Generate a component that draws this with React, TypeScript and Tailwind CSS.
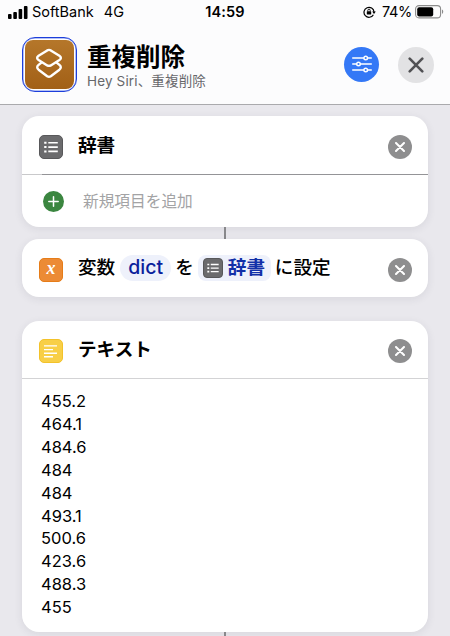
import type { ReactNode } from "react";
import clsx from "clsx";

const VALUES = ["455.2", "464.1", "484.6", "484", "484", "493.1", "500.6", "423.6", "488.3", "455"];

// ── Icons ─────────────────────────────────────────────────────────────────────
function SignalIcon() {
  return (
    <svg width="20" height="13" viewBox="0 0 20 13" fill="#000">
      <rect x="0" y="8" width="3.6" height="5" rx="0.9" />
      <rect x="5.3" y="6" width="3.6" height="7" rx="0.9" />
      <rect x="10.6" y="3" width="3.6" height="10" rx="0.9" />
      <rect x="15.9" y="0" width="3.6" height="13" rx="0.9" />
    </svg>
  );
}

function RotationLockIcon() {
  return (
    <svg width="13" height="12" viewBox="0 0 13 12" fill="none" stroke="#000">
      <path d="M10.4 8.7A5 5 0 1 1 11 6" strokeWidth="1.2" />
      <path d="M9.2 5.6h3.6L11 8z" fill="#000" stroke="none" />
      <rect x="3.8" y="5.2" width="4.4" height="3.4" rx="0.5" fill="#000" stroke="none" />
      <path d="M4.8 5.4V4.4a1.2 1.2 0 0 1 2.4 0v1" strokeWidth="0.9" />
    </svg>
  );
}

function BatteryIcon() {
  return (
    <svg width="29" height="14" viewBox="0 0 29 14" fill="none">
      <rect x="0.6" y="0.6" width="25" height="12.3" rx="3.4" stroke="#8c8c8c" strokeWidth="1.1" />
      <rect x="2.2" y="2.2" width="16" height="9.2" rx="2" fill="#000" />
      <path d="M27 4.6c1.7.6 1.7 3.7 0 4.3z" fill="#8c8c8c" />
    </svg>
  );
}

function ShortcutsGlyph() {
  return (
    <svg width="30" height="34" viewBox="0 0 30 34" fill="none" stroke="#fff" strokeWidth="2.4" strokeLinejoin="round" strokeLinecap="round" className="shrink-0">
      <path d="M12.2 3.4q1.8-1 3.6 0l8.6 5.4q3 2.1 0 4.2l-8.6 5.4q-1.8 1-3.6 0L3.6 13q-3-2.1 0-4.2z" />
      <path d="M6.4 15.6l-2.8 2.3q-2.8 2.4 0 4.8l8.6 6.5q1.8 1.2 3.6 0l8.6-6.5q2.8-2.4 0-4.8l-2.8-2.3" />
    </svg>
  );
}

function SlidersGlyph() {
  return (
    <svg width="20" height="18" viewBox="0 0 20 18" fill="none" stroke="#fff" strokeWidth="1.4" strokeLinecap="round">
      <path d="M.7 3h11.1M15.6 3h3.7M.7 9h3.9M8.4 9h10.9M.7 15h11.1M15.6 15h3.7" />
      <circle cx="13.7" cy="3" r="1.8" />
      <circle cx="6.5" cy="9" r="1.8" />
      <circle cx="13.7" cy="15" r="1.8" />
    </svg>
  );
}

function ListGlyph({ size }: { size: number }) {
  return (
    <svg width={size} height={size} viewBox="0 0 24 24" fill="none" stroke="#fff" className="shrink-0">
      <path d="M5.2 7.8h2.3M5.2 12.1h2.3M5.2 16.4h2.3" strokeWidth="2" />
      <path d="M9.3 7.8h9.5M9.3 12.1h9.5M9.3 16.4h9.5" strokeWidth="1.6" />
    </svg>
  );
}

function TextGlyph() {
  return (
    <svg width="24" height="24" viewBox="0 0 24 24" stroke="#fff" strokeWidth="1.4" className="shrink-0">
      <path d="M5 6.9h13M5 10.6h9M5 14.2h13M5 17.8h9" />
    </svg>
  );
}

// ── Small pieces ──────────────────────────────────────────────────────────────
function RemoveButton() {
  return (
    <button aria-label="削除" className="ml-auto flex size-6 shrink-0 items-center justify-center rounded-full bg-[#8e8e8f]">
      <svg width="10" height="10" viewBox="0 0 10 10" stroke="#fff" strokeWidth="2" strokeLinecap="round">
        <path d="M1 1l8 8M9 1L1 9" />
      </svg>
    </button>
  );
}

function ActionIcon({ className, children }: { className: string; children: ReactNode }) {
  return (
    <span className={clsx("flex size-6 shrink-0 items-center justify-center rounded-[5px] border", className)}>
      {children}
    </span>
  );
}

function Card({ className, children }: { className: string; children: ReactNode }) {
  return (
    <section className={clsx("w-[406px] shrink-0 rounded-[17px] bg-white shadow-[0_2px_9px_rgba(40,40,70,0.09)]", className)}>
      {children}
    </section>
  );
}

// ── Screen ────────────────────────────────────────────────────────────────────
export default function App() {
  return (
    <div className="flex h-[636px] w-[450px] flex-col overflow-hidden bg-[#e9e8ed] font-['Inter','Noto_Sans_CJK_JP',sans-serif] text-black">
      <header className="h-[105px] shrink-0 border-b border-[#aaaaad] bg-[#fcfcfd]">
        {/* Status bar */}
        <div className="grid h-6 grid-cols-[1fr_auto_1fr] items-center pl-2 pr-1.5 text-[14.5px] leading-none">
          <div className="flex items-center">
            <SignalIcon />
            <span className="ml-1">SoftBank</span>
            <span className="ml-2.5">4G</span>
          </div>
          <span className="mr-0.5 font-semibold tracking-[0.15px]">14:59</span>
          <div className="flex items-center justify-end">
            <RotationLockIcon />
            <span className="ml-1.5 mr-[3px] tracking-[-0.3px]">74%</span>
            <BatteryIcon />
          </div>
        </div>

        {/* Shortcut title */}
        <div className="flex h-20 items-center pl-[22px] pr-4">
          <div className="flex size-[55px] items-center justify-center rounded-[13px] border border-[#1c3edb] bg-white shadow-[inset_0_0_0_0.5px_#6d83e8]">
            <div className="flex size-[49px] items-center justify-center rounded-[8px] bg-linear-to-b from-[#b5772a] to-[#a26016]">
              <ShortcutsGlyph />
            </div>
          </div>
          <div className="ml-2.5 pt-[5px]">
            <h1 className="text-[24.5px] font-bold leading-[30px]">重複削除</h1>
            <p className="-mt-px text-[13.5px] leading-5 tracking-[0.15px] text-[#67676a]">Hey Siri、重複削除</p>
          </div>
          <button aria-label="設定" className="ml-auto flex size-[35px] items-center justify-center rounded-full bg-[#3478f6]">
            <SlidersGlyph />
          </button>
          <button aria-label="閉じる" className="ml-[19px] mt-0.5 flex size-9 items-center justify-center rounded-full bg-[#e2e2e4]">
            <svg width="16" height="16" viewBox="0 0 16 16" stroke="#515154" strokeWidth="2.6" strokeLinecap="round">
              <path d="M1.7 1.7l12.6 12.6M14.3 1.7L1.7 14.3" />
            </svg>
          </button>
        </div>
      </header>

      <main className="flex flex-col items-center pt-[11px]">
        {/* Dictionary */}
        <Card className="h-[111px]">
          <div className="flex h-[58px] items-center pl-[17px] pr-4 pt-1">
            <ActionIcon className="border-[#58585a] bg-[#6b6b6d]"><ListGlyph size={24} /></ActionIcon>
            <h2 className="-mt-0.5 ml-[15px] text-[18.6px] font-bold">辞書</h2>
            <RemoveButton />
          </div>
          <div className="flex h-px">
            <div className="w-5 bg-[#c9c9cb]" />
            <div className="flex-1 bg-[#949497]" />
          </div>
          <div className="flex h-[52px] items-center pl-[21px]">
            <span className="flex size-[21px] items-center justify-center rounded-full bg-[#3b8640]">
              <svg width="11" height="11" viewBox="0 0 11 11" stroke="#fff" strokeWidth="1.5" strokeLinecap="round">
                <path d="M5.5.8v9.4M.8 5.5h9.4" />
              </svg>
            </span>
            <span className="ml-[19px] pt-0.5 text-[15.7px] text-[#a3a3a5]">新規項目を追加</span>
          </div>
        </Card>

        <div className="h-3 w-0.5 bg-[#88888b]" />

        {/* Set variable */}
        <Card className="flex h-[58px] items-center pl-[17px] pr-4 text-[18.6px]">
          <ActionIcon className="mt-1 border-[#e67c18] bg-[#ec8b35]">
            <span className="-mt-1 font-['Liberation_Serif',serif] text-[18px] font-bold italic leading-none text-white">x</span>
          </ActionIcon>
          <span className="ml-[15px] font-medium">変数</span>
          <span className="ml-[5px] flex h-[26px] w-[51px] items-center justify-center rounded-full bg-[#eef1fb] text-[19.5px] font-medium text-[#0b1f9c]">dict</span>
          <span className="ml-1 font-medium">を</span>
          <span className="ml-1 flex h-[26px] w-[73px] items-center rounded-lg bg-[#eef1fb] pl-[5px]">
            <span className="flex size-5 shrink-0 items-center justify-center rounded-[4px] border border-[#58585a] bg-[#6b6b6d]"><ListGlyph size={20} /></span>
            <span className="ml-[5px] font-bold text-[#1230a8]">辞書</span>
          </span>
          <span className="ml-1 font-medium">に設定</span>
          <div className="ml-auto mt-1"><RemoveButton /></div>
        </Card>

        {/* Text */}
        <Card className="mt-6 h-[311px]">
          <div className="flex h-[57px] items-center pl-[17px] pr-4 pt-[3px]">
            <ActionIcon className="border-[#f3c22a] bg-[#f8cf47]"><TextGlyph /></ActionIcon>
            <h2 className="-mt-0.5 ml-[15px] text-[18.6px] font-bold">テキスト</h2>
            <RemoveButton />
          </div>
          <div className="h-px bg-[#d3d3d5]" />
          <ul className="pl-[19px] pt-[11.4px] text-[16.5px] leading-[22.85px]">
            {VALUES.map((value, i) => (
              <li key={i}>{value}</li>
            ))}
          </ul>
        </Card>

        <div className="h-3 w-0.5 shrink-0 bg-[#88888b]" />
      </main>
    </div>
  );
}
